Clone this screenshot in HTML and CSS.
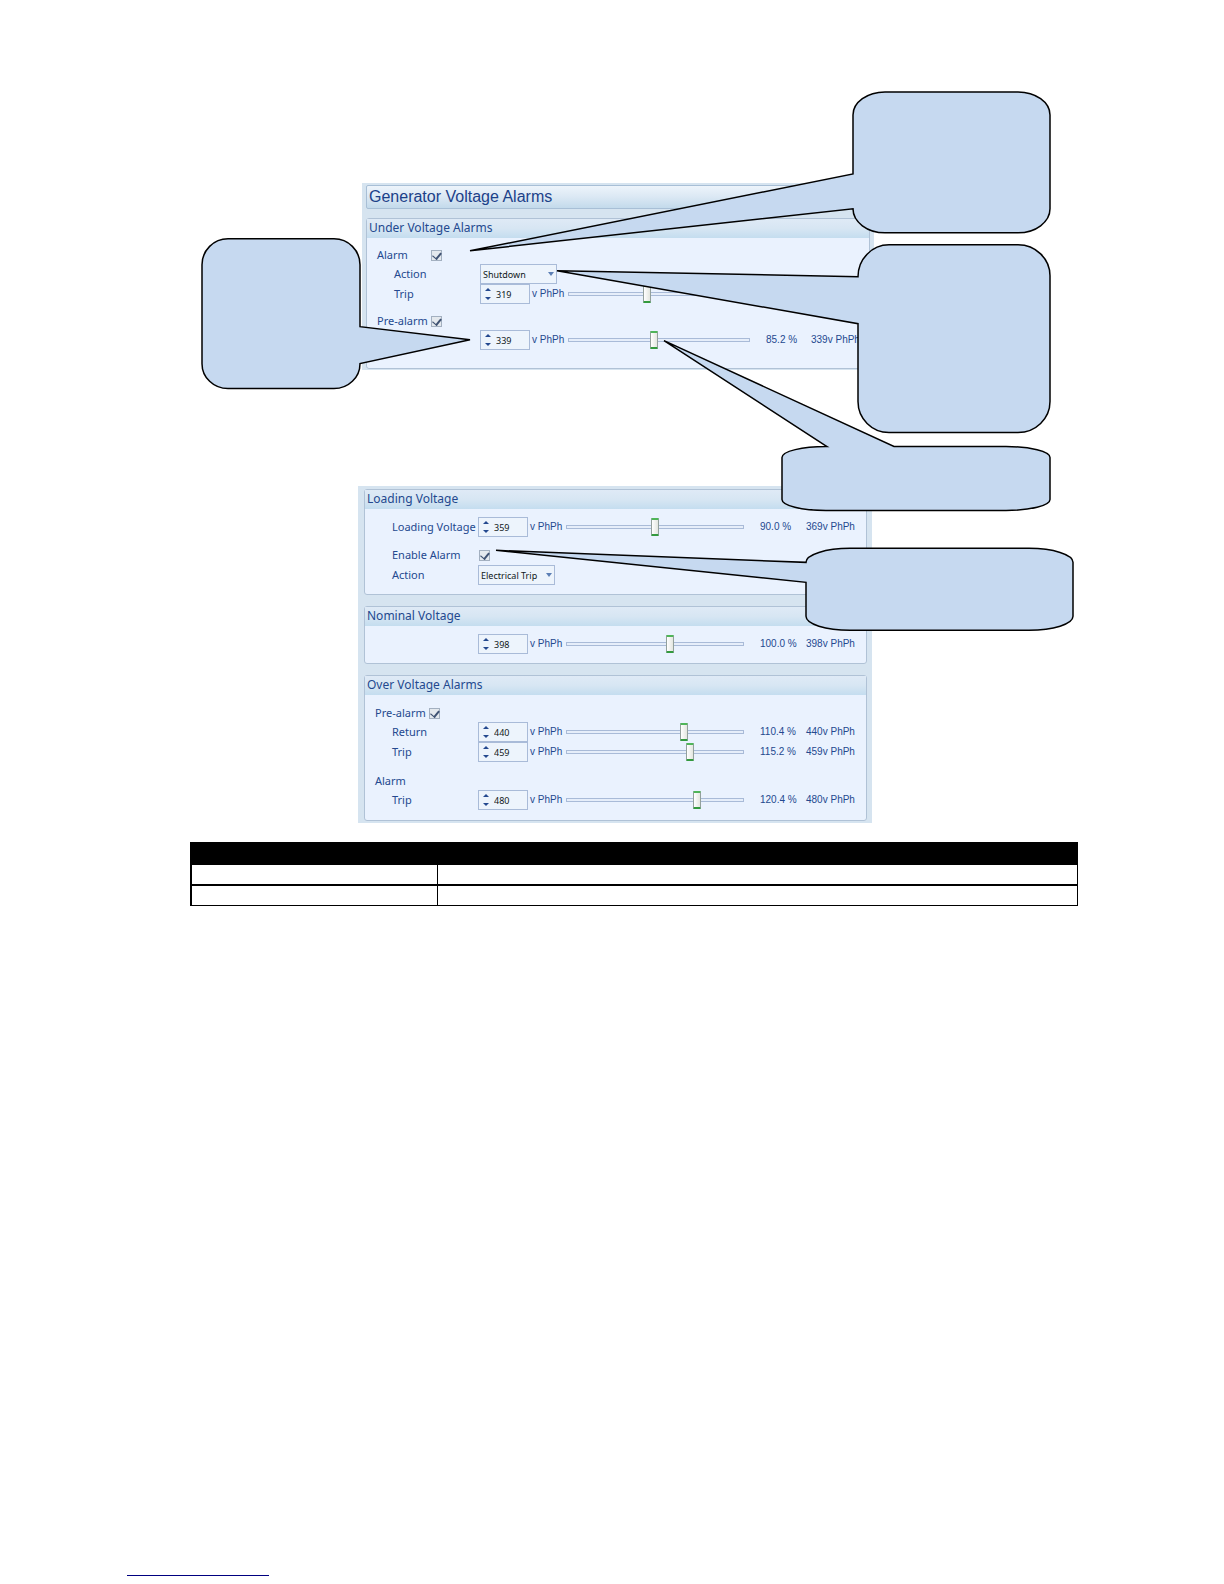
FILE: index.html
```html
<!DOCTYPE html>
<html lang="en">
<head>
    <meta charset="UTF-8"><title>Generator Voltage Alarms</title>
    <link rel="stylesheet" href="styles.css">
</head>
<body>
<main class="content">
    <div class="figure">
        <div class="panel underPanel">
            <h1 class="panelTitle">Generator Voltage Alarms</h1>
            <section class="group">
                <h2 class="groupTitle">Under Voltage Alarms</h2>
                <div class="groupBody underBody">
                    <div class="row checkRow">
                        <div class="labelCell">
                            <label for="underAlarm">Alarm</label>
                            <input type="checkbox" id="underAlarm" class="check" checked>
                        </div>
                    </div>
                    <div class="row">
                        <label class="indent" for="underAction">Action</label>
                        <span class="selectWrapper"><select id="underAction"><option>Shutdown</option></select></span>
                    </div>
                    <div class="row">
                        <label class="indent" for="underTrip">Trip</label>
                        <div class="field">
                            <div class="spinner">
                                <div class="arrows"><button class="up" aria-label="Up"></button><button class="down" aria-label="Down"></button></div>
                                <input type="text" id="underTrip" value="319">
                            </div>
                            <span>v PhPh</span>
                        </div>
                        <input type="range" class="slider" aria-label="Trip" value="43">
                    </div>
                    <div class="row checkRow spaced">
                        <div class="labelCell">
                            <label for="underPre">Pre-alarm</label>
                            <input type="checkbox" id="underPre" class="check" checked>
                        </div>
                    </div>
                    <div class="row">
                        <span></span>
                        <div class="field">
                            <div class="spinner">
                                <div class="arrows"><button class="up" aria-label="Up"></button><button class="down" aria-label="Down"></button></div>
                                <input type="text" aria-label="Pre-alarm" value="339">
                            </div>
                            <span>v PhPh</span>
                        </div>
                        <input type="range" class="slider" aria-label="Pre-alarm" value="47">
                        <span class="percent">85.2 %</span>
                        <span class="volts">339v PhPh</span>
                    </div>
                </div>
            </section>
        </div>

        <div class="panel overPanel">
            <section class="group">
                <h2 class="groupTitle">Loading Voltage</h2>
                <div class="groupBody">
                    <div class="row">
                        <label class="indent" for="loading">Loading Voltage</label>
                        <div class="field">
                            <div class="spinner">
                                <div class="arrows"><button class="up" aria-label="Up"></button><button class="down" aria-label="Down"></button></div>
                                <input type="text" id="loading" value="359">
                            </div>
                            <span>v PhPh</span>
                        </div>
                        <input type="range" class="slider" aria-label="Loading Voltage" value="50">
                        <span class="percent">90.0 %</span>
                        <span class="volts">369v PhPh</span>
                    </div>
                    <div class="row spaced">
                        <label class="indent" for="loadingAlarm">Enable Alarm</label>
                        <input type="checkbox" id="loadingAlarm" class="check" checked>
                    </div>
                    <div class="row">
                        <label class="indent" for="loadingAction">Action</label>
                        <span class="selectWrapper"><select id="loadingAction"><option>Electrical Trip</option></select></span>
                    </div>
                </div>
            </section>

            <section class="group">
                <h2 class="groupTitle">Nominal Voltage</h2>
                <div class="groupBody">
                    <div class="row">
                        <span></span>
                        <div class="field">
                            <div class="spinner">
                                <div class="arrows"><button class="up" aria-label="Up"></button><button class="down" aria-label="Down"></button></div>
                                <input type="text" aria-label="Nominal Voltage" value="398">
                            </div>
                            <span>v PhPh</span>
                        </div>
                        <input type="range" class="slider" aria-label="Nominal Voltage" value="59">
                        <span class="percent">100.0 %</span>
                        <span class="volts">398v PhPh</span>
                    </div>
                </div>
            </section>

            <section class="group">
                <h2 class="groupTitle">Over Voltage Alarms</h2>
                <div class="groupBody overBody">
                    <div class="row checkRow">
                        <div class="labelCell">
                            <label for="overPre">Pre-alarm</label>
                            <input type="checkbox" id="overPre" class="check" checked>
                        </div>
                    </div>
                    <div class="row">
                        <label class="indent" for="overReturn">Return</label>
                        <div class="field">
                            <div class="spinner">
                                <div class="arrows"><button class="up" aria-label="Up"></button><button class="down" aria-label="Down"></button></div>
                                <input type="text" id="overReturn" value="440">
                            </div>
                            <span>v PhPh</span>
                        </div>
                        <input type="range" class="slider" aria-label="Return" value="67">
                        <span class="percent">110.4 %</span>
                        <span class="volts">440v PhPh</span>
                    </div>
                    <div class="row">
                        <label class="indent" for="overPreTrip">Trip</label>
                        <div class="field">
                            <div class="spinner">
                                <div class="arrows"><button class="up" aria-label="Up"></button><button class="down" aria-label="Down"></button></div>
                                <input type="text" id="overPreTrip" value="459">
                            </div>
                            <span>v PhPh</span>
                        </div>
                        <input type="range" class="slider" aria-label="Pre-alarm trip" value="71">
                        <span class="percent">115.2 %</span>
                        <span class="volts">459v PhPh</span>
                    </div>
                    <div class="row checkRow spaced">
                        <div class="labelCell">Alarm</div>
                    </div>
                    <div class="row">
                        <label class="indent" for="overTrip">Trip</label>
                        <div class="field">
                            <div class="spinner">
                                <div class="arrows"><button class="up" aria-label="Up"></button><button class="down" aria-label="Down"></button></div>
                                <input type="text" id="overTrip" value="480">
                            </div>
                            <span>v PhPh</span>
                        </div>
                        <input type="range" class="slider" aria-label="Alarm trip" value="75">
                        <span class="percent">120.4 %</span>
                        <span class="volts">480v PhPh</span>
                    </div>
                </div>
            </section>
        </div>

        <!-- callout balloons, they point at controls in the panels below them -->
        <svg class="callouts" viewBox="190 90 888 734" preserveAspectRatio="none" aria-hidden="true">
            <path d="M885 92H1018A32 23 0 0 1 1050 115V209A32 24 0 0 1 1018 233H885A32 24 0 0 1 853 209L470 251L853 174V115A32 23 0 0 1 885 92Z"/>
            <path d="M889 245H1018A32 31 0 0 1 1050 276V402A32 31 0 0 1 1018 433H889A31 31 0 0 1 858 402V324L557 271L858 277A31 32 0 0 1 889 245Z"/>
            <path d="M228 239H334A26 26 0 0 1 360 265V327L470 340L360 364A26 25 0 0 1 334 389H228A26 25 0 0 1 202 364V265A26 26 0 0 1 228 239Z"/>
            <path d="M827 447L664 341L894 447H1006A44 11 0 0 1 1050 458V500A44 11 0 0 1 1006 511H826A44 11 0 0 1 782 500V458A44 11 0 0 1 827 447Z"/>
            <path d="M850 549H1029A44 14 0 0 1 1073 563V617A44 14 0 0 1 1029 631H850A44 14 0 0 1 806 617V583L496 551L806 563A44 14 0 0 1 850 549Z"/>
        </svg>
    </div>

    <table class="terms">
        <thead>
            <tr><th></th><th></th></tr>
        </thead>
        <tbody>
            <tr><td></td><td></td></tr>
            <tr><td></td><td></td></tr>
        </tbody>
    </table>
</main>
<hr class="footerLine">
</body>
</html>
```
FILE: styles.css
```css
* {
    box-sizing: border-box;
}
body {
    margin: 0;
    min-height: 100vh;
    display: flex;
    flex-direction: column;
    background-color: white;
    font-family: "Noto Sans", sans-serif;
    font-size: 11px;
    line-height: 16px;
    color: #24498f;
}
.content {
    padding: 90px 146px 0 190px;
}
.figure {
    position: relative;
    padding-top: 93px;
}
.callouts {
    position: absolute;
    top: 0;
    left: 0;
    width: 100%;
    height: 100%;
    overflow: visible;
    pointer-events: none;
}
.callouts path {
    fill: #c6d9f0;
    stroke: black;
    stroke-width: 1.5;
    vector-effect: non-scaling-stroke;
}

/* panels */
.panel {
    display: flex;
    flex-direction: column;
    background-color: #d6e4f0;
}
.underPanel {
    margin: 0 204px 116px 172px;
    padding: 2px 4px 1px;
    gap: 9px;
}
.overPanel {
    margin: 0 206px 0 168px;
    padding: 3px 5px 2px 6px;
    gap: 11px;
}
.panelTitle {
    margin: 0;
    height: 24px;
    padding-left: 2px;
    border: 1px solid #a8bfd6;
    border-radius: 2px;
    background: linear-gradient(#edf4fb, #dbe8f4 50%, #c3daeb);
    font-family: "Liberation Sans", Arial, sans-serif;
    font-size: 16px;
    font-weight: normal;
    line-height: 22px;
    color: #1c4189;
}
.group {
    border: 1px solid #b0c2d6;
    border-radius: 3px;
    background-color: #eaf2fe;
}
.groupTitle {
    margin: 0;
    height: 19px;
    padding-left: 2px;
    background: linear-gradient(#dfeaf6, #d7e6f3 50%, #c4ddef);
    font-size: 12px;
    font-weight: normal;
    line-height: 18px;
}
.groupBody {
    padding: 8px 0 9px;
}
.underBody {
    padding-bottom: 18px;
}
.overBody {
    padding: 9px 0 10px;
}

/* rows */
.row {
    display: grid;
    grid-template-columns: 113px 88px 1fr 62px 60px;
    align-items: center;
    height: 20px;
}
.underBody .row {
    grid-template-columns: 113px 88px 1fr 61px 58px;
}
.checkRow, .underBody .checkRow {
    height: 18px;
}
.spaced {
    margin-top: 8px;
}
.overBody .spaced {
    margin-top: 10px;
}
.labelCell {
    display: grid;
    grid-template-columns: 54px 12px;
    align-items: center;
    padding-left: 10px;
    white-space: nowrap;
}
.indent {
    padding-left: 27px;
    white-space: nowrap;
}
.field {
    display: flex;
    align-items: center;
    gap: 2px;
    font-family: "Liberation Sans", Arial, sans-serif;
    font-size: 10px;
    white-space: nowrap;
}
.percent, .volts {
    font-family: "Liberation Sans", Arial, sans-serif;
    font-size: 10px;
    white-space: nowrap;
}
.percent {
    padding-left: 16px;
}

/* controls */
.check {
    appearance: none;
    width: 11px;
    height: 11px;
    margin: 0;
    border: 1px solid #a3b0c0;
    background: #e4e9ee;
    display: grid;
    place-items: center;
}
.row > .check {
    margin-left: 1px;
}
.check:checked::after {
    content: "";
    width: 4px;
    height: 7px;
    border: solid #3f5273;
    border-width: 0 2px 1px 0;
    transform: rotate(40deg);
}
.selectWrapper {
    position: relative;
    width: 77px;
    height: 20px;
}
.selectWrapper::after {
    content: "";
    position: absolute;
    top: 8px;
    right: 3px;
    border: 3px solid transparent;
    border-top: 4px solid #5c7fb5;
    border-bottom: 0;
    pointer-events: none;
}
select {
    appearance: none;
    width: 100%;
    height: 20px;
    padding: 0 0 0 2px;
    border: 1px solid #a9bbd8;
    border-radius: 0;
    background-color: #edf4fc;
    font-family: "Noto Sans", sans-serif;
    font-size: 9px;
    color: #101820;
}
.spinner {
    display: flex;
    align-items: center;
    width: 50px;
    height: 20px;
    border: 1px solid #a9bbd8;
    background-color: #edf4fc;
}
.arrows {
    display: flex;
    flex-direction: column;
    gap: 6px;
    padding: 0 4px;
}
.arrows button {
    width: 6px;
    height: 3px;
    padding: 0;
    border: 0 solid transparent;
    border-width: 0 3px;
    background: none;
}
.arrows .up {
    border-bottom: 3px solid #24498f;
}
.arrows .down {
    border-top: 3px solid #24498f;
}
.spinner input {
    width: 30px;
    height: 16px;
    padding: 0 0 0 1px;
    border: 0;
    background: none;
    font-family: "Noto Sans", sans-serif;
    font-size: 9px;
    color: #101820;
}
.slider {
    appearance: none;
    width: 100%;
    height: 18px;
    margin: 0;
    background: none;
}
.slider::-webkit-slider-runnable-track {
    height: 4px;
    border: 1px solid #a9bbd8;
    background-color: #e6eefa;
}
.slider::-webkit-slider-thumb {
    appearance: none;
    width: 8px;
    height: 18px;
    margin-top: -8px;
    border: 1px solid #93a09c;
    border-top: 2px solid #4fb559;
    border-bottom: 2px solid #339a3e;
    border-radius: 1px;
    background: linear-gradient(90deg, white, #e3e6e0);
}

/* table */
.terms {
    width: 100%;
    margin-top: 19px;
    border-collapse: separate;
    border-spacing: 0;
    border: 1px solid black;
    border-width: 0 1px 0 2px;
    table-layout: fixed;
}
.terms th {
    height: 23px;
    padding: 0;
    background-color: black;
}
.terms th:first-child {
    width: 246px;
}
.terms td {
    height: 21px;
    padding: 0;
    border-bottom: 2px solid black;
}
.terms td:first-child {
    border-right: 1px solid black;
}
.terms tr:last-child td {
    height: 20px;
    border-bottom-width: 1px;
}

.footerLine {
    width: 142px;
    margin: auto 0 8px 127px;
    border: 0;
    border-top: 1px solid #000080;
}
```
